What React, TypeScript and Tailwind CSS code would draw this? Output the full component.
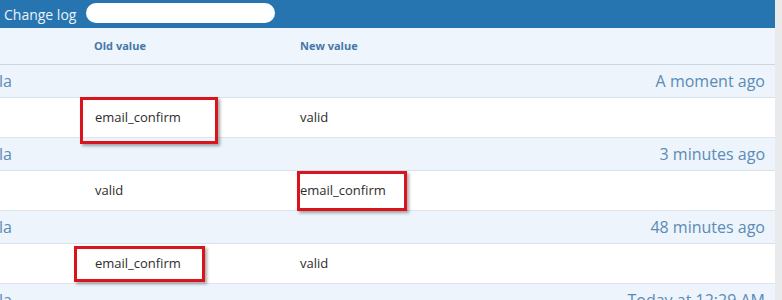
import React from 'react';

interface Change {
  when: string;
  oldValue: string;
  newValue: string;
  mark: 'old' | 'new';
}

const CHANGES: Change[] = [
  { when: 'A moment ago', oldValue: 'email_confirm', newValue: 'valid', mark: 'old' },
  { when: '3 minutes ago', oldValue: 'valid', newValue: 'email_confirm', mark: 'new' },
  { when: '48 minutes ago', oldValue: 'email_confirm', newValue: 'valid', mark: 'old' },
];

// annotation boxes drawn over the screenshot, one per row
const MARKS = [
  'left-[80px] top-[-1px] w-[138px] h-[47px]',
  'left-[297px] top-0 w-[110px] h-[40px]',
  'left-[74px] top-[2px] w-[131px] h-[36px]',
];

const GroupRow = ({ when }: { when: string }) => (
  <div className="flex h-[33px] items-center justify-between border-b border-[#d9e2eb] bg-[#edf4fc] pr-[10px] text-[16px] text-[#5b8bb6]">
    <span className="-ml-[1px]">la</span>
    <span>{when}</span>
  </div>
);

const DataRow = ({ change, index }: { change: Change; index: number }) => (
  <div className="relative flex h-[40px] items-center border-b border-[#dfe4ea] bg-white pt-[1px] text-[13px] text-[#2d2d2d]">
    <span className="w-[300px] pl-[95px]">{change.oldValue}</span>
    <span>{change.newValue}</span>
    <div
      className={`absolute ${MARKS[index]} border-[3px] border-[#d9141c] shadow-[2px_2px_3px_rgba(0,0,0,0.35)]`}
    />
  </div>
);

export default function App() {
  return (
    <div className="flex h-[300px] w-[782px] overflow-hidden bg-[#e9eaeb] font-['Open_Sans',sans-serif]">
      <div className="w-[775px] bg-white">
        <div className="flex h-[28px] items-center bg-[#2775b0]">
          <span className="pl-[4px] text-[14px] text-[#eaf2f9]">Change log</span>
          <div className="mb-[3px] ml-[10px] h-[20px] w-[189px] rounded-full bg-white blur-[0.6px]" />
        </div>
        <div className="flex h-[37px] items-center border-b border-[#ccd7e2] bg-[#eef5fd] pt-[1px] text-[11px] font-bold text-[#4677a8]">
          <span className="w-[300px] pl-[94px]">Old value</span>
          <span>New value</span>
        </div>
        {CHANGES.map((c, i) => (
          <React.Fragment key={c.when}>
            <GroupRow when={c.when} />
            <DataRow change={c} index={i} />
          </React.Fragment>
        ))}
        <GroupRow when="Today at 12:29 AM" />
      </div>
    </div>
  );
}
